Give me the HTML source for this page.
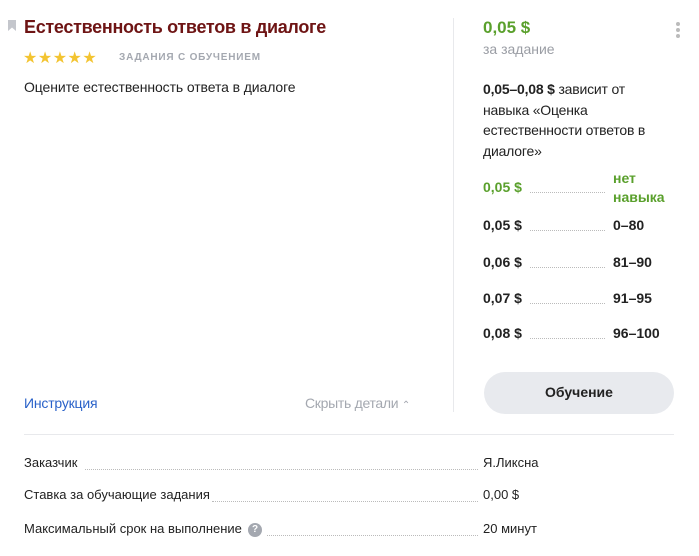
<!DOCTYPE html>
<html><head><meta charset="utf-8"><style>
*{margin:0;padding:0;box-sizing:border-box}
body{width:699px;height:556px;background:#fff;font-family:"Liberation Sans",sans-serif;color:#222;position:relative;overflow:hidden;font-size:14px}
.a{position:absolute;white-space:nowrap}
.dots{position:absolute;border-bottom:1px dotted #bbb;height:1px}
.g{color:#5aa02c;font-weight:bold}
.b{font-weight:bold}
</style></head><body>
<svg class="a" style="left:8px;top:20px" width="8" height="11"><path d="M0 0H8V11L4 7.5L0 11Z" fill="#c4c6cc"/></svg>
<div class="a" style="left:24px;top:17px;font-size:18px;font-weight:bold;color:#6e1414;letter-spacing:-0.3px">Естественность ответов в диалоге</div>
<div class="a" style="left:23px;top:48px;font-size:16px;color:#f3c431;letter-spacing:0.5px">★★★★★</div>
<div class="a" style="left:119px;top:52px;font-size:10px;font-weight:bold;color:#a4a8b0;letter-spacing:0.8px">ЗАДАНИЯ С ОБУЧЕНИЕМ</div>
<div class="a" style="left:24px;top:79px;font-size:14px;letter-spacing:-0.1px">Оцените естественность ответа в диалоге</div>
<div class="a" style="left:24px;top:395px;font-size:14px;color:#2a62c9;letter-spacing:-0.2px">Инструкция</div>
<div class="a" style="left:305px;top:395px;font-size:14px;color:#a4a8b0;letter-spacing:-0.3px">Скрыть детали <span style="font-size:10px">⌃</span></div>
<div class="a" style="left:453px;top:18px;width:1px;height:394px;background:#e8e9ec"></div>
<div class="a g" style="left:483px;top:18px;font-size:17px">0,05 $</div>
<div class="a" style="left:483px;top:41px;font-size:14px;color:#9a9da4">за задание</div>
<div class="a" style="left:676px;top:22px;width:4px;height:4px;border-radius:2px;background:#bbb;box-shadow:0 6px 0 #bbb,0 12px 0 #bbb"></div>
<div class="a" style="left:483px;top:79px;font-size:14px;line-height:20.5px;white-space:normal;width:170px;letter-spacing:-0.2px"><b>0,05–0,08 $</b> зависит от навыка «Оценка естественности ответов в диалоге»</div>
<div class="a g" style="left:483px;top:179px">0,05 $</div><div class="dots" style="left:530px;top:192px;width:75px"></div>
<div class="a g" style="left:613px;top:169px;line-height:19px">нет<br>навыка</div>
<div class="a b" style="left:483px;top:217px">0,05 $</div><div class="dots" style="left:530px;top:230px;width:75px"></div><div class="a b" style="left:613px;top:217px">0–80</div>
<div class="a b" style="left:483px;top:254px">0,06 $</div><div class="dots" style="left:530px;top:267px;width:75px"></div><div class="a b" style="left:613px;top:254px">81–90</div>
<div class="a b" style="left:483px;top:290px">0,07 $</div><div class="dots" style="left:530px;top:303px;width:75px"></div><div class="a b" style="left:613px;top:290px">91–95</div>
<div class="a b" style="left:483px;top:325px">0,08 $</div><div class="dots" style="left:530px;top:338px;width:75px"></div><div class="a b" style="left:613px;top:325px">96–100</div>
<div class="a" style="left:484px;top:372px;width:190px;height:42px;border-radius:21px;background:#e8eaee;text-align:center;line-height:40px;font-weight:bold;font-size:14px">Обучение</div>
<div class="a" style="left:24px;top:434px;width:650px;height:1px;background:#e8e9ec"></div>
<div class="a" style="left:24px;top:455px;font-size:13px">Заказчик</div><div class="dots" style="left:85px;top:469px;width:393px"></div><div class="a" style="left:483px;top:455px;font-size:13px">Я.Ликсна</div>
<div class="a" style="left:24px;top:487px;font-size:13px">Ставка за обучающие задания</div><div class="dots" style="left:212px;top:501px;width:266px"></div><div class="a" style="left:483px;top:487px;font-size:13px">0,00 $</div>
<div class="a" style="left:24px;top:521px;font-size:13px">Максимальный срок на выполнение</div>
<div class="a" style="left:248px;top:523px;width:14px;height:14px;border-radius:7px;background:#a4a8b0;color:#fff;font-size:10px;font-weight:bold;text-align:center;line-height:14px">?</div>
<div class="dots" style="left:267px;top:535px;width:211px"></div><div class="a" style="left:483px;top:521px;font-size:13px">20 минут</div>
</body></html>
